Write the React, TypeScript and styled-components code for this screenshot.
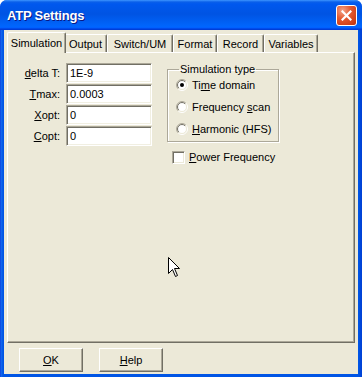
import React from 'react';
import styled, { createGlobalStyle } from 'styled-components';

const GlobalStyle = createGlobalStyle`
  html, body {
    margin: 0;
    padding: 0;
    background: #ffffff;
  }
  body {
    font-family: "Liberation Sans", Arial, sans-serif;
    font-size: 11px;
    color: #000;
  }
`;

const Window = styled.div`
  position: relative;
  width: 362px;
  height: 377px;
  display: flex;
  flex-direction: column;
  background: linear-gradient(to right, #0831d9 0px, #166aee 1px, #0055e5 3px, #0055e5 359px, #0042d6 361px);
  border-radius: 7px 7px 0 0;
  overflow: hidden;
`;

const TitleBar = styled.div`
  height: 30px;
  flex: none;
  display: flex;
  align-items: center;
  justify-content: space-between;
  padding: 0 5px 0 7px;
  background: linear-gradient(
    to bottom,
    #3d95ff 0px,
    #0a5fe9 2px,
    #0058ee 4px,
    #0054e3 14px,
    #0063f8 24px,
    #0066ff 27px,
    #005bff 28px,
    #003dd7 29px
  );
`;

const Title = styled.span`
  color: #fff;
  font-family: "Liberation Sans", Arial, sans-serif;
  font-weight: bold;
  font-size: 13px;
  letter-spacing: -0.2px;
  text-shadow: 1px 1px 0 #0a1883;
  margin-top: 1px;
`;

const CloseButton = styled.div`
  width: 21px;
  height: 21px;
  box-sizing: border-box;
  border: 1px solid #fff;
  border-radius: 3px;
  background: radial-gradient(circle at 30% 25%, #f3a58a 0%, #e45b32 40%, #d2421a 75%, #b8330f 100%);
  display: flex;
  align-items: center;
  justify-content: center;
  margin-top: 1px;
`;

const Client = styled.div`
  flex: 1;
  margin: 0 4px 3px 4px;
  background: #ece9d8;
  display: flex;
  flex-direction: column;
  padding: 2px 3px 0 3px;
`;

const TabStrip = styled.div`
  height: 20px;
  display: flex;
  align-items: flex-end;
  padding-left: 2px;
  position: relative;
  z-index: 1;
`;

const Tab = styled.div<{ $w: number; $active?: boolean }>`
  box-sizing: border-box;
  width: ${(p) => p.$w}px;
  height: ${(p) => (p.$active ? 21 : 18)}px;
  margin-bottom: ${(p) => (p.$active ? -1 : 0)}px;
  margin-left: ${(p) => (p.$active ? -2 : 0)}px;
  margin-right: ${(p) => (p.$active ? -2 : 0)}px;
  background: #ece9d8;
  border-top: 1px solid #fff;
  border-left: 1px solid #fff;
  border-right: 1px solid #716f64;
  border-radius: 2px 2px 0 0;
  box-shadow: inset -1px 0 0 #aca899;
  display: flex;
  align-items: center;
  justify-content: center;
  padding-top: ${(p) => (p.$active ? 0 : 1)}px;
  white-space: nowrap;
  z-index: ${(p) => (p.$active ? 2 : 1)};
`;

const Pane = styled.div`
  height: 291px;
  box-sizing: border-box;
  border-top: 1px solid #fff;
  border-left: 1px solid #fff;
  border-right: 1px solid #716f64;
  border-bottom: 1px solid #716f64;
  box-shadow: inset -1px -1px 0 #aca899;
  display: flex;
  align-items: flex-start;
  padding: 10px 0 0 0;
  column-gap: 15px;
`;

const Fields = styled.div`
  display: grid;
  grid-template-columns: 52px 86px;
  column-gap: 6px;
  row-gap: 1px;
  align-items: center;
`;

const Label = styled.label`
  text-align: right;
  white-space: nowrap;
`;

const TextBox = styled.div`
  box-sizing: border-box;
  height: 20px;
  background: #fff;
  border: 1px solid;
  border-color: #aca899 #fff #fff #aca899;
  box-shadow: inset 1px 1px 0 #716f64, inset -1px -1px 0 #f1efe2;
  padding: 0 3px;
  display: flex;
  align-items: center;
`;

const RightColumn = styled.div`
  display: flex;
  flex-direction: column;
`;

const GroupBox = styled.fieldset`
  box-sizing: border-box;
  width: 112px;
  margin: 0;
  padding: 0 0 1px 8px;
  border: 1px solid #aca899;
  box-shadow: 1px 1px 0 #fff, inset 1px 1px 0 #fff;
  display: flex;
  flex-direction: column;
`;

const Legend = styled.legend`
  padding: 0 1px;
  margin-left: 3px;
  margin-bottom: -2px;
  line-height: 13px;
`;

const OptionRow = styled.div`
  height: 22px;
  display: flex;
  align-items: center;
  gap: 4px;
  white-space: nowrap;
`;

const CheckRow = styled(OptionRow)`
  margin: 4px 0 0 5px;
  gap: 4px;
`;

const ButtonRow = styled.div`
  display: flex;
  gap: 16px;
  padding: 5px 0 0 12px;
`;

const Button = styled.div`
  box-sizing: border-box;
  width: 64px;
  height: 24px;
  border-top: 1px solid #fff;
  border-left: 1px solid #fff;
  border-right: 1px solid #716f64;
  border-bottom: 1px solid #716f64;
  box-shadow: inset -1px -1px 0 #aca899;
  display: flex;
  align-items: center;
  justify-content: center;
`;

const Cursor = styled.svg`
  position: absolute;
  left: 168px;
  top: 257px;
`;

const U = styled.span`
  text-decoration: underline;
  text-underline-offset: 1px;
`;

const Radio: React.FC<{ checked?: boolean }> = ({ checked }) => (
  <svg width="12" height="12" viewBox="0 0 12 12">
    <defs>
      <linearGradient id="rg" x1="0" y1="0" x2="1" y2="1">
        <stop offset="0.45" stopColor="#aca899" />
        <stop offset="0.55" stopColor="#ffffff" />
      </linearGradient>
      <linearGradient id="rg2" x1="0" y1="0" x2="1" y2="1">
        <stop offset="0.45" stopColor="#716f64" />
        <stop offset="0.55" stopColor="#ece9d8" />
      </linearGradient>
    </defs>
    <circle cx="6" cy="6" r="5.5" fill="none" stroke="url(#rg)" strokeWidth="1" />
    <circle cx="6" cy="6" r="4.5" fill="#fff" stroke="url(#rg2)" strokeWidth="1" />
    {checked && <circle cx="6" cy="6" r="2" fill="#000" />}
  </svg>
);

const CheckBox = styled.div`
  box-sizing: border-box;
  width: 13px;
  height: 13px;
  background: #fff;
  border: 1px solid;
  border-color: #aca899 #fff #fff #aca899;
  box-shadow: inset 1px 1px 0 #716f64, inset -1px -1px 0 #ece9d8;
`;

const tabs = [
  { label: 'Simulation', w: 59, active: true },
  { label: 'Output', w: 43 },
  { label: 'Switch/UM', w: 66 },
  { label: 'Format', w: 44 },
  { label: 'Record', w: 47 },
  { label: 'Variables', w: 54 },
];

const fields = [
  { key: 'd', rest: 'elta T:', value: '1E-9' },
  { key: 'T', rest: 'max:', value: '0.0003' },
  { key: 'X', rest: 'opt:', value: '0' },
  { key: 'C', rest: 'opt:', value: '0' },
];

const App: React.FC = () => {
  return (
    <Window>
      <GlobalStyle />
      <TitleBar>
        <Title>ATP Settings</Title>
        <CloseButton>
          <svg width="11" height="11" viewBox="0 0 11 11">
            <path d="M1.5 1.5 L9.5 9.5 M9.5 1.5 L1.5 9.5" stroke="#fff" strokeWidth="2.2" strokeLinecap="square" />
          </svg>
        </CloseButton>
      </TitleBar>
      <Client>
        <TabStrip>
          {tabs.map((t) => (
            <Tab key={t.label} $w={t.w} $active={t.active}>
              {t.label}
            </Tab>
          ))}
        </TabStrip>
        <Pane>
          <Fields>
            {fields.map((f) => (
              <React.Fragment key={f.rest + f.key}>
                <Label>
                  <U>{f.key}</U>
                  {f.rest}
                </Label>
                <TextBox>{f.value}</TextBox>
              </React.Fragment>
            ))}
          </Fields>
          <RightColumn>
            <GroupBox>
              <Legend>Simulation type</Legend>
              <OptionRow>
                <Radio checked />
                <span>
                  Ti<U>m</U>e domain
                </span>
              </OptionRow>
              <OptionRow>
                <Radio />
                <span>
                  Frequency <U>s</U>can
                </span>
              </OptionRow>
              <OptionRow>
                <Radio />
                <span>
                  <U>H</U>armonic (HFS)
                </span>
              </OptionRow>
            </GroupBox>
            <CheckRow>
              <CheckBox />
              <span>
                <U>P</U>ower Frequency
              </span>
            </CheckRow>
          </RightColumn>
        </Pane>
        <ButtonRow>
          <Button>
            <span>
              <U>O</U>K
            </span>
          </Button>
          <Button>
            <span>
              <U>H</U>elp
            </span>
          </Button>
        </ButtonRow>
      </Client>
      <Cursor width="13" height="21" viewBox="0 0 13 21">
        <path
          d="M0.5 0.5 L0.5 16.5 L4.5 12.5 L7.5 19.5 L9.5 18.5 L6.5 11.5 L11.5 11.5 Z"
          fill="#fff"
          stroke="#000"
          strokeWidth="1"
          strokeLinejoin="miter"
        />
      </Cursor>
    </Window>
  );
};

export default App;
